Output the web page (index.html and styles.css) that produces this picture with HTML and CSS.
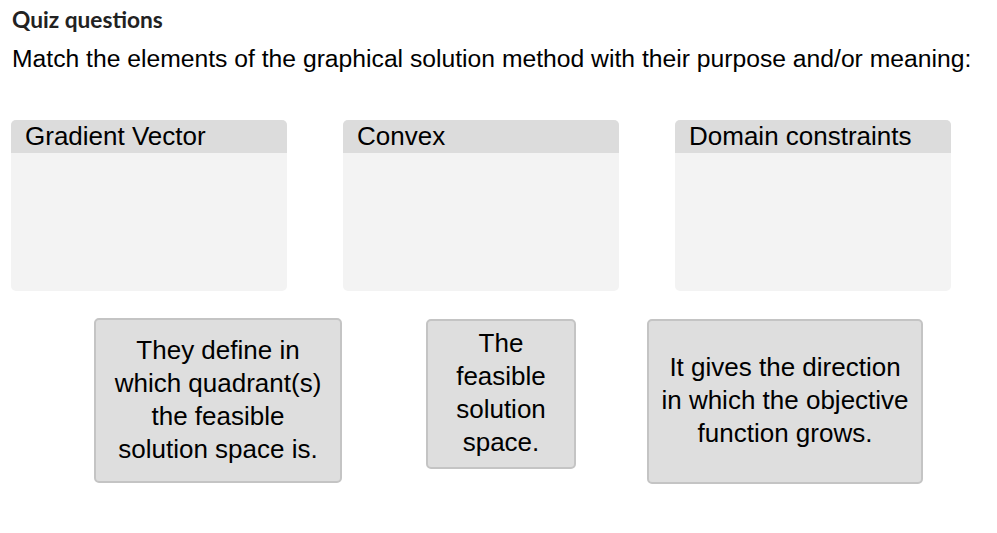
FILE: index.html
```html
<html>
    <head>
        <title>Quiz questions</title>
        <link rel="stylesheet" href="styles.css">
    </head>
    <body>
        <div class="page">
            <h3 class="quiz-title">Quiz questions</h3>
            <p class="prompt">Match the elements of the graphical solution method with their purpose and/or meaning:</p>
            <div class="targets">
                <div class="target">
                    <div class="target-head">Gradient Vector</div>
                    <div class="target-body"></div>
                </div>
                <div class="target">
                    <div class="target-head">Convex</div>
                    <div class="target-body"></div>
                </div>
                <div class="target">
                    <div class="target-head">Domain constraints</div>
                    <div class="target-body"></div>
                </div>
            </div>
            <div class="choices">
                <div class="choice choice-a">They define in which quadrant(s) the feasible solution space is.</div>
                <div class="choice choice-b">The feasible solution space.</div>
                <div class="choice choice-c">It gives the direction in which the objective function grows.</div>
            </div>
        </div>
    </body>
</html>
```

FILE: styles.css
```css
body{
    margin: 0;
    background: #ffffff;
    font-family: "Liberation Sans", Arial, sans-serif;
    color: #000000;
}
.page{
    padding: 6px 0 0 11px;
}
.quiz-title{
    font-family: Lato, "Open Sans", sans-serif;
    font-weight: bold;
    font-size: 22.7px;
    line-height: 27px;
    color: #222222;
    margin: 0 0 0 1px;
}
.prompt{
    font-size: 24.7px;
    line-height: 30px;
    margin: 11px 0 0 1px;
}
.targets{
    display: flex;
    gap: 56px;
    margin-top: 46px;
}
.target{
    width: 276px;
    height: 171px;
    border-radius: 5px;
    overflow: hidden;
    background: #f3f3f3;
    display: flex;
    flex-direction: column;
}
.target-head{
    height: 33px;
    background: #dcdcdc;
    font-size: 26px;
    line-height: 33px;
    padding-left: 14px;
}
.choices{
    display: flex;
    align-items: flex-start;
    margin-top: 27px;
    padding-left: 83px;
}
.choice{
    box-sizing: border-box;
    background: #dedede;
    border: 2px solid #c4c4c4;
    border-radius: 5px;
    font-size: 26px;
    line-height: 33px;
    text-align: center;
    display: flex;
    align-items: center;
    justify-content: center;
    padding: 0 10px;
}
.choice-a{
    width: 248px;
    height: 165px;
    padding: 0 14px 2px;
}
.choice-b{
    width: 150px;
    height: 150px;
    margin-left: 84px;
    margin-top: 1px;
    padding-bottom: 2px;
}
.choice-c{
    width: 276px;
    height: 165px;
    margin-left: 71px;
    margin-top: 1px;
    padding: 0 10px 2px;
}
```
